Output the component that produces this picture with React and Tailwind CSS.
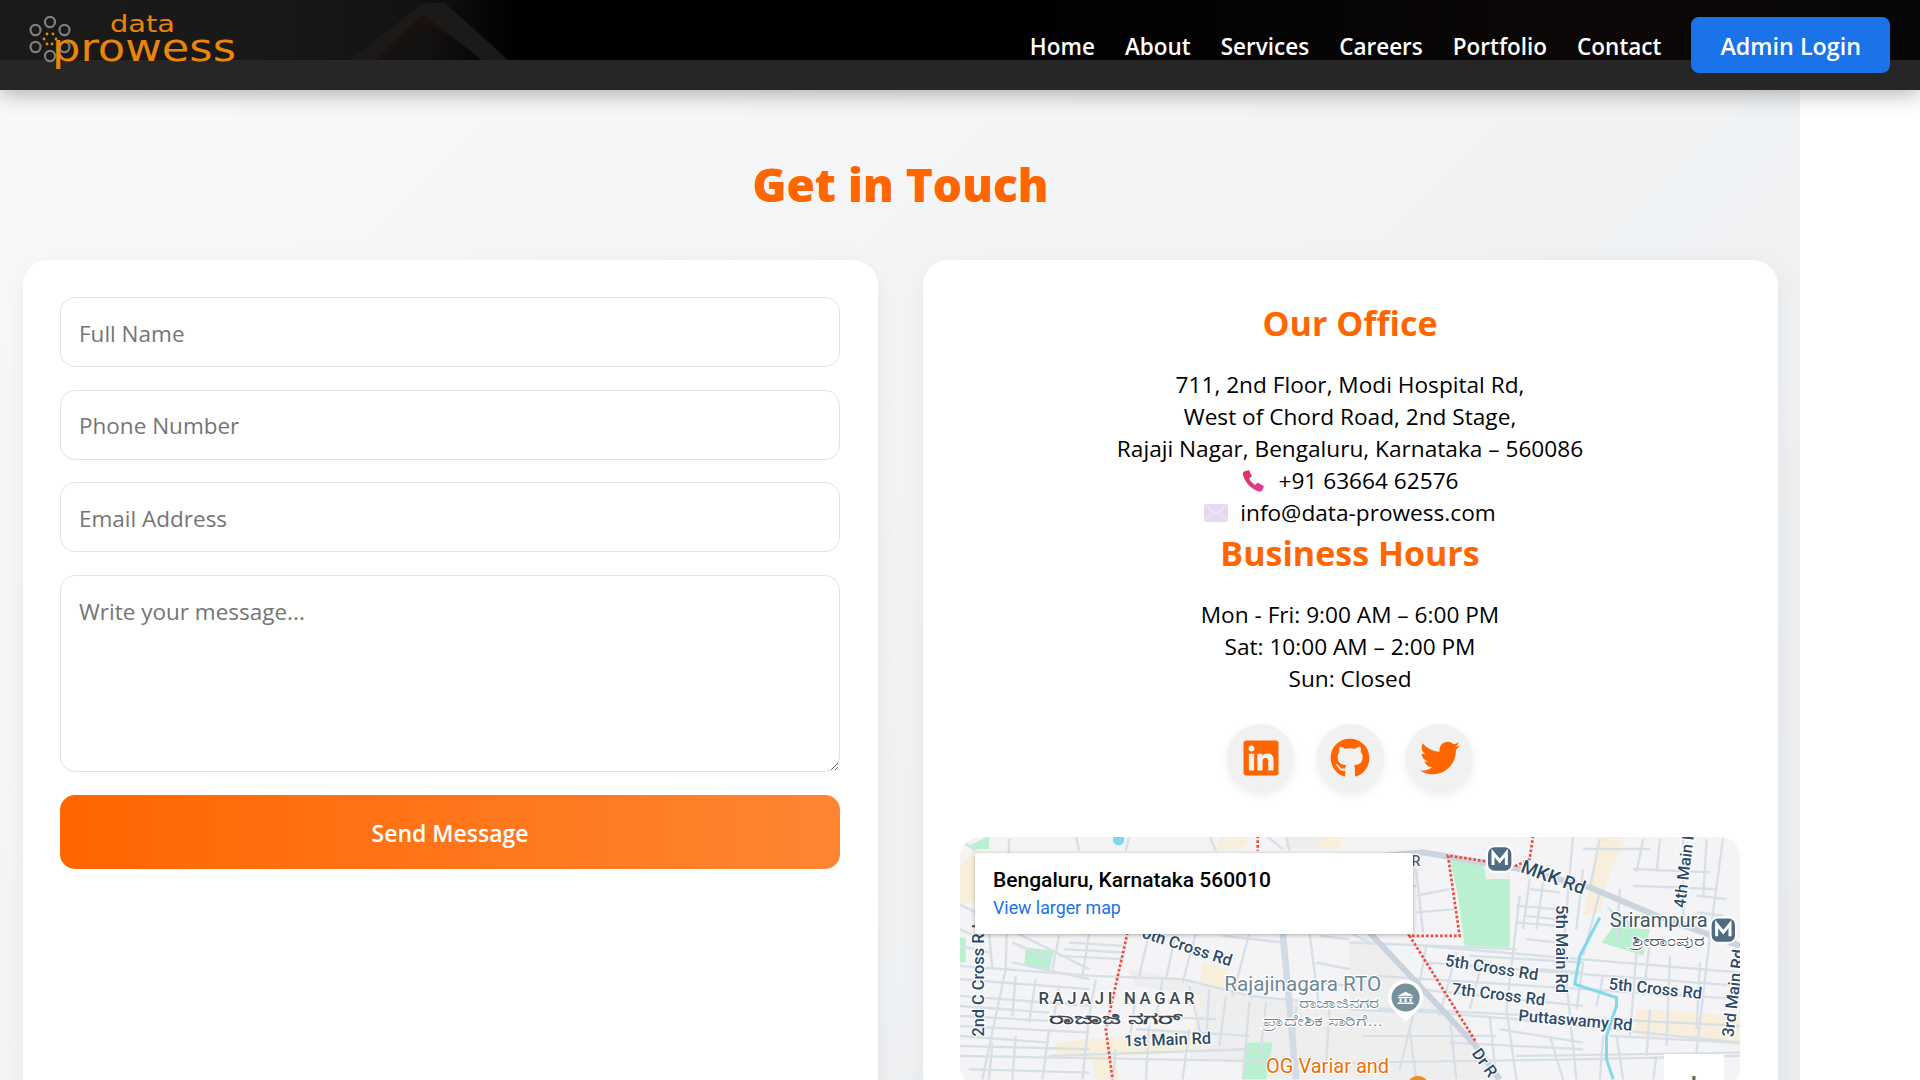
import { FaLinkedin, FaGithub, FaTwitter } from 'react-icons/fa';

const FONT = "font-['Open_Sans','Noto_Sans',sans-serif]";
const FIELD = 'border-[1.5px] border-[#e2e2e2] rounded-[15px] px-[18px] text-[22.5px] placeholder:text-[#757575] outline-none';

const navLinks = ['Home', 'About', 'Services', 'Careers', 'Portfolio', 'Contact'];
const socials = [FaLinkedin, FaGithub, FaTwitter];

// thin streets on the map, in units of 1/3 px
const streets = [
  'M30 225L200 310L420 420', 'M30 410L430 440L700 450L900 500L1200 530L1700 570L2370 640',
  'M30 450L420 480', 'M30 500L420 530', 'M30 560L300 575', 'M30 620L300 640', 'M30 680L1200 700L1900 690L2370 680',
  'M180 30L170 420L100 750', 'M120 310L130 420', 'M330 320L310 420', 'M420 310L400 440', 'M330 380L520 390',
  'M360 340L520 350', 'M345 360L520 370', 'M600 310L570 440', 'M680 310L650 450', 'M740 310L700 460', 'M900 310L850 500', 'M1080 310L1110 540',
  'M950 20L1000 60', 'M380 20L390 65', 'M540 20L530 65', 'M780 20L800 65', 'M1010 20L1020 65', 'M30 30L80 65',
  'M300 600L280 750', 'M420 560L400 750', 'M600 580L590 750', 'M720 600L700 750', 'M900 520L880 750', 'M300 680L900 660',
  'M560 500L540 640', 'M720 470L760 640', 'M1200 340L1700 360', 'M1200 230L1400 170', 'M1200 310L1260 340',
  'M1710 200L1670 540L1700 750', 'M1780 160L1760 300', 'M1870 20L1840 360L1880 750', 'M1950 190L1900 380', 'M2010 180L2000 340',
  'M2100 340L2080 500', 'M2200 30L2200 270', 'M2320 20L2280 320L2230 750', 'M1430 350L1400 520L1350 720', 'M1520 370L1470 560',
  'M1600 390L1560 540', 'M1380 540L2370 590', 'M1280 440L2370 510', 'M1420 350L2370 430', 'M1200 540L1400 550',
  'M1240 620L1640 620', 'M1700 680L2370 670', 'M1980 620L2370 640', 'M2060 370L2040 620', 'M2160 380L2150 650',
  'M1900 60L2100 60', 'M2050 120L2280 130', 'M2050 170L2300 180', 'M1700 230L1820 240', 'M1700 280L1820 290', 'M1760 420L1900 430',
  'M1380 600L1400 750', 'M1500 560L1520 750', 'M1620 560L1640 750', 'M1800 620L1840 750', 'M2000 620L2020 750',
  // denser residential grid
  'M30 350L120 370', 'M30 300L100 330', 'M190 340L300 390', 'M190 400L420 450', 'M30 530L300 550', 'M30 590L420 610', 'M30 650L420 660',
  'M60 720L420 730', 'M200 440L190 560', 'M260 450L240 580', 'M330 470L310 590', 'M130 640L120 750', 'M200 620L190 750', 'M500 660L490 750',
  'M440 450L420 560', 'M640 450L620 560', 'M830 500L810 650', 'M780 480L770 640', 'M950 520L930 700', 'M1040 530L1030 700', 'M1140 540L1130 700',
  'M560 600L900 620', 'M560 560L800 570', 'M820 320L1000 340', 'M1100 400L1200 420', 'M1100 460L1200 470', 'M1110 320L1200 330', 'M1120 130L1200 130',
  'M1740 150L1720 300', 'M1730 330L1820 340', 'M1740 180L1830 190', 'M1720 260L1820 270', 'M1400 200L1500 180', 'M1400 250L1520 240', 'M1290 100L1310 310',
  'M1400 120L1420 310', 'M1900 400L1880 540', 'M1960 440L1940 530', 'M1430 400L2370 470', 'M1400 480L1900 530', 'M2240 200L2330 210', 'M2240 250L2320 260',
  'M1560 380L1900 400', 'M1650 600L1900 640', 'M1500 640L1900 660', 'M2100 540L2090 680', 'M2250 400L2240 600', 'M1960 620L1950 750', 'M2120 680L2110 750', 'M2270 680L2260 750',
  'M1900 120L1880 300', 'M1950 30L1920 180', 'M2080 30L2060 130', 'M2130 30L2120 130', 'M2270 30L2260 200',
];

// map label with the white halo that Google draws round its text
function MapLabel({ x, y, size = 49, rotate = 0, fill = '#2c4a68', weight = 500, spacing = 0, length, children }) {
  return (
    <text
      x={x}
      y={y}
      fontSize={size}
      fill={fill}
      fontWeight={weight}
      letterSpacing={spacing}
      textLength={length}
      lengthAdjust={length ? 'spacingAndGlyphs' : undefined}
      fontFamily="Roboto, 'Noto Sans', sans-serif"
      stroke="#fff"
      strokeWidth="7"
      paintOrder="stroke"
      transform={rotate ? `rotate(${rotate} ${x} ${y})` : undefined}
    >
      {children}
    </text>
  );
}

function MetroPin({ x, y }) {
  return (
    <g>
      <rect x={x - 38} y={y - 38} width="76" height="76" rx="22" fill="#4f6b85" stroke="#fff" strokeWidth="6" />
      <path d={`M${x - 20} ${y + 18}V${y - 18}L${x} ${y + 6}L${x + 20} ${y - 18}V${y + 18}`} fill="none" stroke="#fff" strokeWidth="9" />
    </g>
  );
}

function MapPicture() {
  return (
    <svg viewBox="33 24 2337 750" preserveAspectRatio="xMinYMin slice" className="block w-full h-[250px]">
      <rect x="0" y="0" width="2400" height="800" fill="#f4f3f5" />
      {/* blocks */}
      <path d="M820 20H900L880 60H800ZM1090 20H1180L1170 60H1080Z" fill="#f7efdc" />
      <path d="M1940 20H2030L1980 130L1950 250L1900 260L1930 130Z" fill="#f7efdc" />
      <path d="M2060 540L2370 560V650L2060 620Z" fill="#f7efdc" />
      <path d="M760 400L840 420L800 640L730 640ZM320 640L760 600L740 670L500 680L510 750H440L430 690L320 670ZM30 120L90 40V210L30 230Z" fill="#f7efdc" />
      <path d="M540 420L700 450L900 500L1200 540V750H880V700L720 690L760 500L560 470Z" fill="#eeeeef" />
      <path d="M1200 340L1260 320L1560 640L1650 750H1200Z" fill="#eeeeef" />
      <path d="M1020 20H1120L1100 60H1000Z" fill="#eeeeef" />
      <path d="M230 355L315 365L300 425L225 410ZM30 325H50V400H30ZM890 640H970L950 750H880ZM60 50L120 20V60H70Z" fill="#b9f0cf" />
      <path d="M1500 90L1680 100L1680 355L1545 350L1525 200Z" fill="#b9f0cf" />
      <path d="M1600 100L1680 110V150H1610Z" fill="#f0f0f0" />
      <path d="M1970 230L2070 300L2100 300L2080 380L1955 340L2000 280Z" fill="#b9f0cf" />
      <circle cx="508" cy="32" r="17" fill="#7fd8ee" />

      {streets.map((d, i) => (
        <path key={i} d={d} fill="none" stroke="#d7dfe7" strokeWidth="7" />
      ))}

      {/* main roads */}
      <path d="M1000 310L1040 750" fill="none" stroke="#d3dbe4" strokeWidth="20" />
      <path d="M1200 90L1420 70L1710 120L1920 175L2120 260L2370 350" fill="none" stroke="#cbd5df" strokeWidth="18" />
      <path d="M1260 310L1570 640L1650 750" fill="none" stroke="#c9d3dd" strokeWidth="18" />

      {/* river */}
      <path d="M1950 265L1890 380L1875 465L2000 505L2000 530L1970 620L1970 690L1990 750" fill="none" stroke="#7fd8ee" strokeWidth="9" />

      {/* ward boundaries */}
      <g fill="none" stroke="#f04a3e" strokeWidth="8" strokeDasharray="8 6">
        <path d="M1750 20L1740 90L1700 110L1495 80L1530 320L1380 320L1580 640" />
        <path d="M925 20V65M535 310L470 600L490 750" />
      </g>

      <MetroPin x={1650} y={90} />
      <MetroPin x={2320} y={303} />

      {/* RTO pin */}
      <path d="M1315 505a52 52 0 1 1 106 0c0 30 -30 50 -53 72c-23 -22 -53 -42 -53 -72z" fill="#fff" />
      <circle cx="1368" cy="505" r="42" fill="#78909c" />
      <path d="M1344 500L1368 488L1392 500ZM1346 503H1390V507H1346ZM1350 509H1356V518H1350ZM1365 509H1371V518H1365ZM1380 509H1386V518H1380ZM1344 520H1392V524H1344Z" fill="#fff" />

      <MapLabel x={105} y={622} rotate={-90}>2nd C Cross Rd</MapLabel>
      <MapLabel x={575} y={325} rotate={18}>0th Cross Rd</MapLabel>
      <MapLabel x={268} y={525} size={50} fill="#3f4750" spacing={11}>RAJAJI NAGAR</MapLabel>
      <MapLabel x={300} y={585} size={52} fill="#3f4750" weight={700} length={400}>ರಾಜಾಜಿ ನಗರ್</MapLabel>
      <MapLabel x={525} y={652} rotate={-2}>1st Main Rd</MapLabel>
      <MapLabel x={825} y={485} size={62} fill="#6f8795" weight={400}>Rajajinagara RTO</MapLabel>
      <MapLabel x={1050} y={535} size={44} fill="#6f8795" weight={400} length={240}>ರಾಜಾಜಿನಗರ</MapLabel>
      <MapLabel x={940} y={590} size={44} fill="#6f8795" weight={400} length={360}>ಪ್ರಾದೇಶಿಕ ಸಾರಿಗೆ...</MapLabel>
      <MapLabel x={950} y={732} size={60} fill="#e8710a" weight={400}>OG Variar and</MapLabel>
      <MapLabel x={1385} y={112} size={44} fill="#4f5b66">R</MapLabel>
      <MapLabel x={1710} y={128} size={56} rotate={20}>MKK Rd</MapLabel>
      <MapLabel x={1818} y={228} rotate={90}>5th Main Rd</MapLabel>
      <MapLabel x={2205} y={238} rotate={-83}>4th Main Rd</MapLabel>
      <MapLabel x={1980} y={295} size={60} fill="#3f5566" weight={400}>Srirampura</MapLabel>
      <MapLabel x={2045} y={350} size={44} fill="#3f5566" weight={400} length={220}>ಶ್ರೀರಾಂಪುರ</MapLabel>
      <MapLabel x={1485} y={410} rotate={9}>5th Cross Rd</MapLabel>
      <MapLabel x={1505} y={495} rotate={7}>7th Cross Rd</MapLabel>
      <MapLabel x={1975} y={480} rotate={6}>5th Cross Rd</MapLabel>
      <MapLabel x={1705} y={575} rotate={5}>Puttaswamy Rd</MapLabel>
      <MapLabel x={2350} y={625} rotate={-83}>3rd Main Rd</MapLabel>
      <MapLabel x={1565} y={672} rotate={55}>Dr R</MapLabel>
      <circle cx="1405" cy="775" r="35" fill="#f08a24" />
    </svg>
  );
}

export default function App() {
  return (
    <div className={`h-[1080px] w-[1920px] overflow-hidden bg-white text-black ${FONT}`}>
      {/* Navbar */}
      <header className="relative h-[90px] bg-[#262626] shadow-[0_4px_20px_rgba(0,0,0,0.3)] z-10 flex items-start justify-between px-[30px]">
        <div className="absolute inset-x-0 top-0 h-[60px] bg-[linear-gradient(90deg,#1b1a19_0%,#191817_14%,#141211_22%,#000_27%,#000_50%,#060404_70%,#0d0807_85%,#060606_100%)]">
          <svg viewBox="0 0 1920 60" className="w-full h-full">
            <path d="M423 3L353 60H380L425 24L500 60H503Z" fill="#1a1110" />
            <path d="M423 3L445 3L508 60H482L423 14L375 60H350Z" fill="#1b1a19" />
          </svg>
        </div>
        <svg viewBox="0 0 210 56" className="relative block w-[210px] h-[56px] mt-[14px] overflow-visible">
          <g fill="none" stroke="#7e7e7e" strokeWidth="2.2">
            <ellipse cx="20" cy="8" rx="5" ry="5.2" />
            <ellipse cx="5.500" cy="16" rx="5" ry="5.2" />
            <ellipse cx="34.500" cy="16" rx="5" ry="5.2" />
            <ellipse cx="5.500" cy="33" rx="5" ry="5.2" />
            <ellipse cx="34.500" cy="33" rx="5" ry="5.2" />
            <ellipse cx="20" cy="42" rx="5" ry="5.2" />
          </g>
          <g fill="#e8860a">
            <circle cx="17" cy="20" r="1.4" /><circle cx="23" cy="20" r="1.4" />
            <circle cx="14" cy="25" r="1.4" /><circle cx="26" cy="25" r="1.4" />
            <circle cx="17" cy="30" r="1.4" /><circle cx="22" cy="30" r="1.4" />
          </g>
          <text x="80" y="18" fontSize="23" fill="#e8860a" fontFamily="'DejaVu Sans', sans-serif" textLength="65" lengthAdjust="spacingAndGlyphs">data</text>
          <text x="22" y="47" fontSize="38" fill="#e8860a" fontFamily="'DejaVu Sans', sans-serif" textLength="184" lengthAdjust="spacingAndGlyphs">prowess</text>
        </svg>
        <nav className="relative flex items-center gap-[30px] mt-[17px] h-[56px]">
          {navLinks.map((link) => (
            <a key={link} className="text-white text-[22.5px] font-semibold leading-none pt-[4px]">{link}</a>
          ))}
          <a className="bg-[#1a73e8] text-white text-[23.3px] font-semibold rounded-lg h-[56px] px-[29px] pt-[2px] flex items-center">Admin Login</a>
        </nav>
      </header>

      {/* Contact section */}
      <section className="w-[1800px] h-[1500px] bg-[linear-gradient(135deg,#f8f9fa,#e9ecef)] pl-[23px] pr-[22px] pt-[69px]">
        <h1 className="text-center text-[#ff6600] text-[46px] leading-[50px] font-extrabold">Get in Touch</h1>
        <div className="grid grid-cols-2 gap-[45px] mt-[51px]">
          <form className="bg-white rounded-[25px] shadow-[0_8px_30px_rgba(0,0,0,0.06)] pl-[37px] pr-[38px] py-[37px] flex flex-col gap-[22.67px] h-[1200px]">
            <input placeholder="Full Name" className={`h-[70px] pt-[2px] ${FIELD}`} />
            <input placeholder="Phone Number" className={`h-[70px] pt-[2px] ${FIELD}`} />
            <input placeholder="Email Address" className={`h-[70px] pt-[2px] ${FIELD}`} />
            <textarea placeholder="Write your message..." className={`h-[197.500px] py-[19px] ${FIELD}`} />
            <button type="button" className="h-[74px] pt-[2px] rounded-[15px] bg-[linear-gradient(90deg,#ff6600,#ff8533)] text-white text-[23px] font-semibold">Send Message</button>
          </form>

          <div className="bg-white rounded-[25px] shadow-[0_8px_30px_rgba(0,0,0,0.06)] pl-[37px] pr-[38px] pt-[38px] text-center h-[1200px]">
            <h2 className="text-[#ff6600] text-[34px] leading-[50px] font-bold">Our Office</h2>
            <div className="mt-[21px] text-[22.65px] leading-[32px]">
              <p>711, 2nd Floor, Modi Hospital Rd,</p>
              <p>West of Chord Road, 2nd Stage,</p>
              <p>Rajaji Nagar, Bengaluru, Karnataka – 560086</p>
              <p className="flex items-center justify-center gap-[12px]">
                <svg viewBox="0 0 24 24" className="w-[25px] h-[25px]">
                  <defs>
                    <linearGradient id="phoneGrad" x1="0" y1="0" x2="1" y2="1">
                      <stop offset="0" stopColor="#e0344f" />
                      <stop offset="1" stopColor="#e23aa0" />
                    </linearGradient>
                  </defs>
                  <path d="M3 2.500l4.500-1.500 3 6-2.600 2.200c1 2.500 3 4.700 5.700 6.100l2.400-2.300 6 3.500-1.600 4c-.6 1-1.800 1.500-3 1.200C9.800 20 2.800 11.500 1.800 4.800c-.1-1 .3-1.900 1.200-2.300z" fill="url(#phoneGrad)" />
                </svg>
                +91 63664 62576
              </p>
              <p className="flex items-center justify-center gap-[12px]">
                <svg viewBox="0 0 24 18" className="w-[24px] h-[18px]">
                  <rect width="24" height="18" fill="#e6d9f2" />
                  <path d="M0 0L12 10L24 0M0 18L9 8M24 18L15 8" fill="none" stroke="#f4eefa" strokeWidth="1" />
                </svg>
                info@data-prowess.com
              </p>
            </div>
            <h2 className="text-[#ff6600] text-[34px] leading-[50px] font-bold -mt-[1px]">Business Hours</h2>
            <div className="mt-[21px] text-[22.65px] leading-[32px]">
              <p>Mon - Fri: 9:00 AM – 6:00 PM</p>
              <p>Sat: 10:00 AM – 2:00 PM</p>
              <p>Sun: Closed</p>
            </div>
            <div className="flex justify-center gap-[22.5px] mt-[29px]">
              {socials.map((Icon, i) => (
                <a key={i} className="w-[67px] h-[67px] rounded-full bg-[#f1f1f1] shadow-[0_4px_10px_rgba(0,0,0,0.08)] flex items-center justify-center text-[#ff6600]">
                  <Icon className="w-[40px] h-[40px]" />
                </a>
              ))}
            </div>
            <div className="relative mt-[46px] rounded-[20px] overflow-hidden text-left">
              <MapPicture />
              <div className="absolute left-[15px] top-[16px] w-[438px] h-[81px] bg-white rounded-[2px] shadow-[0_1px_4px_rgba(0,0,0,0.3)] pl-[18px] pt-[14px] font-['Roboto',sans-serif]">
                <p className="text-[21px] leading-[27px] font-medium">Bengaluru, Karnataka 560010</p>
                <p className="text-[17.8px] leading-[27px] text-[#1a73e8]">View larger map</p>
              </div>
              <div className="absolute left-[704px] top-[217px] w-[60px] h-[60px] bg-white text-center text-[#666] text-[34px] leading-[60px] font-['Roboto',sans-serif]">+</div>
            </div>
          </div>
        </div>
      </section>
    </div>
  );
}
